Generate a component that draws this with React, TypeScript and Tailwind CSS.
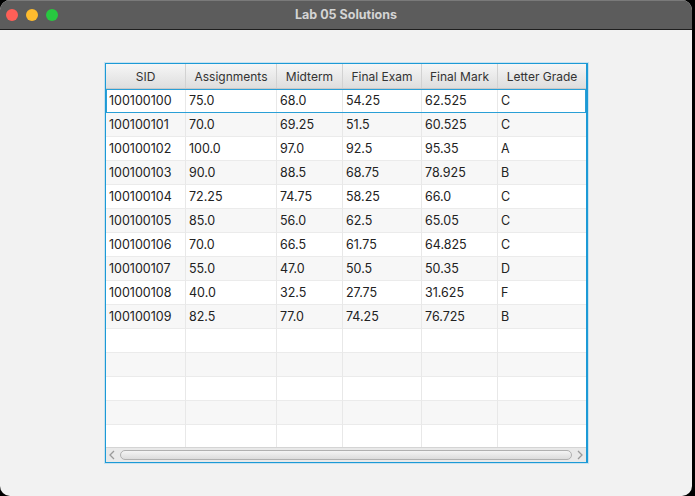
import React from 'react';

const cols = [
  { name: 'SID', w: 'w-[80px]' },
  { name: 'Assignments', w: 'w-[91px]' },
  { name: 'Midterm', w: 'w-[66px]' },
  { name: 'Final Exam', w: 'w-[79px]' },
  { name: 'Final Mark', w: 'w-[76px]' },
  { name: 'Letter Grade', w: 'w-[88px]' },
];

const rows: string[][] = [
  ['100100100', '75.0', '68.0', '54.25', '62.525', 'C'],
  ['100100101', '70.0', '69.25', '51.5', '60.525', 'C'],
  ['100100102', '100.0', '97.0', '92.5', '95.35', 'A'],
  ['100100103', '90.0', '88.5', '68.75', '78.925', 'B'],
  ['100100104', '72.25', '74.75', '58.25', '66.0', 'C'],
  ['100100105', '85.0', '56.0', '62.5', '65.05', 'C'],
  ['100100106', '70.0', '66.5', '61.75', '64.825', 'C'],
  ['100100107', '55.0', '47.0', '50.5', '50.35', 'D'],
  ['100100108', '40.0', '32.5', '27.75', '31.625', 'F'],
  ['100100109', '82.5', '77.0', '74.25', '76.725', 'B'],
];

const empty = ['', '', '', '', '', ''];
const allRows = [...rows, empty, empty, empty, empty, empty];

export default function App() {
  return (
    <div className="w-[695px] h-[496px] bg-black overflow-hidden" style={{ fontFamily: 'Inter, "Liberation Sans", sans-serif' }}>
      <div className="w-[692px] h-[496px] rounded-[10px] overflow-hidden bg-[#f2f2f2] flex flex-col">
        {/* title bar */}
        <div className="h-[30px] shrink-0 bg-[#5c5c5c] border-t border-[#7a7a7a] border-b border-b-[#1e1e1e] relative flex items-center justify-center">
          <div className="absolute left-[6px] top-[8px] flex gap-[8px]">
            <span className="w-[12px] h-[12px] rounded-full bg-[#fe5f57]" />
            <span className="w-[12px] h-[12px] rounded-full bg-[#febc2e]" />
            <span className="w-[12px] h-[12px] rounded-full bg-[#28c840]" />
          </div>
          <span className="text-[12.5px] font-bold text-[#d4d4d4]">Lab 05 Solutions</span>
        </div>

        {/* table */}
        <div className="mt-[33px] ml-[105px] w-[483px] h-[400px] border border-[#1c9ad6] border-r-2 shadow-[0_0_0_1px_rgba(80,180,230,0.25)] bg-white flex flex-col overflow-hidden">
          <div className="h-[25px] shrink-0 flex bg-gradient-to-b from-[#f6f6f6] to-[#dedede] border-b border-[#c8c8c8]">
            {cols.map((c, i) => (
              <div
                key={c.name}
                className={`${c.w} shrink-0 flex items-center justify-center pt-[1px] text-[12px] text-[#333] ${i < cols.length - 1 ? 'border-r border-[#d2d2d2]' : ''}`}
              >
                {c.name}
              </div>
            ))}
          </div>
          <div className="flex-1 overflow-hidden">
            {allRows.map((r, ri) => (
              <div
                key={ri}
                className={`h-[24px] flex relative ${ri % 2 === 1 ? 'bg-[#f7f7f7]' : 'bg-white'}`}
              >
                {ri === 0 && <div className="absolute inset-0 border border-[#2a9fd6] pointer-events-none" />}
                {r.map((v, ci) => (
                  <div
                    key={ci}
                    className={`${cols[ci].w} shrink-0 flex items-center pl-[3px] pt-[1px] text-[12.5px] text-[#222] border-b border-[#ebebeb] ${ci < cols.length - 1 ? 'border-r border-r-[#e8e8e8]' : ''}`}
                  >
                    {v}
                  </div>
                ))}
              </div>
            ))}
          </div>
          {/* horizontal scrollbar */}
          <div className="h-[15px] shrink-0 bg-[#e9e9e9] border-t border-[#d4d4d4] flex items-center px-[2px] gap-[4px]">
            <svg width="8" height="10" viewBox="0 0 8 10" className="shrink-0">
              <path d="M6 1 L2 5 L6 9" fill="none" stroke="#9a9a9a" strokeWidth="1.3" />
            </svg>
            <div className="flex-1 h-[10px] rounded-full border border-[#b0b0b0] bg-gradient-to-b from-[#f4f4f4] to-[#dcdcdc]" />
            <svg width="8" height="10" viewBox="0 0 8 10" className="shrink-0">
              <path d="M2 1 L6 5 L2 9" fill="none" stroke="#9a9a9a" strokeWidth="1.3" />
            </svg>
          </div>
        </div>
      </div>
    </div>
  );
}
